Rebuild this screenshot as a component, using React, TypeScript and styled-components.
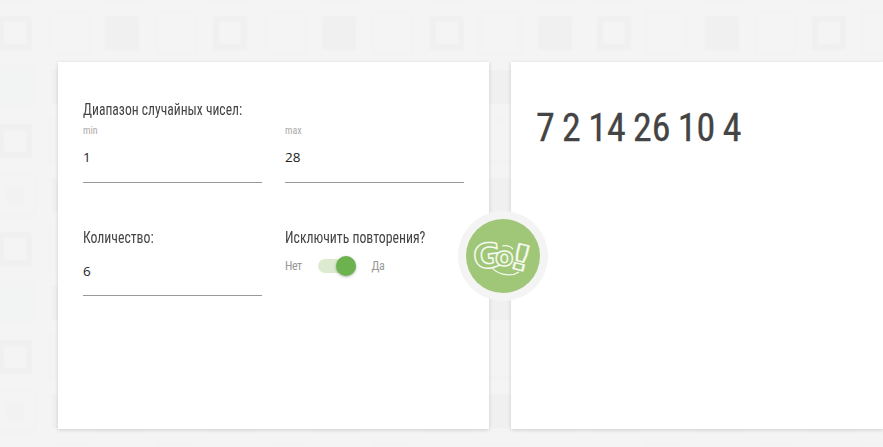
import React from "react";
import styled, { createGlobalStyle } from "styled-components";

const Global = createGlobalStyle`
  html, body { margin: 0; padding: 0; height: 100%; overflow: hidden; background: #f4f4f4; }
  #root { height: 100%; }
`;

const condensed = `"Liberation Sans Narrow", "Roboto Condensed", "Liberation Sans", sans-serif`;

const Page = styled.div`
  position: relative;
  height: 447px;
  overflow: hidden;
  box-sizing: border-box;
  padding: 62px 0 18px 58px;
  font-family: ${condensed};
  color: #444;
`;

const Backdrop = styled.svg`
  position: absolute;
  inset: 0;
`;

const Cards = styled.main`
  position: relative;
  display: flex;
  gap: 22px;
  height: 100%;
`;

const Card = styled.section`
  background: #fff;
  box-shadow: 0 1px 4px rgba(0, 0, 0, 0.16);
`;

const SettingsCard = styled(Card)`
  width: 431px;
  box-sizing: border-box;
  padding: 38px 25px 0;
  display: grid;
  grid-template-columns: 179px 179px;
  column-gap: 23px;
  grid-auto-rows: min-content;
`;

const ResultCard = styled(Card)`
  flex: 1;
  padding: 43px 25px;
`;

const Heading = styled.div`
  font-size: 16px;
  line-height: 19px;
  grid-column: 1 / -1;
  color: #444;
  white-space: nowrap;
  transform: scaleX(0.85);
  transform-origin: left center;
`;

const Field = styled.div<{ $top?: number }>`
  display: flex;
  flex-direction: column;
  margin-top: ${(p) => p.$top ?? 0}px;
`;

const SmallLabel = styled.div`
  font-size: 10px;
  line-height: 12px;
  color: #aaa;
  margin-top: 6px;
`;

const FieldLabel = styled.div`
  font-size: 16px;
  line-height: 19px;
  white-space: nowrap;
  transform: scaleX(0.86);
  transform-origin: left center;
`;

const Value = styled.div<{ $top: number; $pad: number }>`
  font-family: "Open Sans", "Noto Sans", sans-serif;
  font-size: 13.5px;
  line-height: 19px;
  color: #222;
  margin-top: ${(p) => p.$top}px;
  padding-bottom: ${(p) => p.$pad}px;
  border-bottom: 1px solid #999;
`;

const ToggleRow = styled.div`
  display: flex;
  align-items: center;
  margin-top: 9px;
  height: 20px;
  font-size: 12px;
  letter-spacing: -0.5px;
  color: #999;
`;

const Track = styled.div`
  position: relative;
  width: 38px;
  height: 14px;
  border-radius: 7px;
  background: #dcebd0;
  margin: 0 16px;
`;

const Thumb = styled.div`
  position: absolute;
  right: 0;
  top: -3px;
  width: 20px;
  height: 20px;
  border-radius: 50%;
  background: #6cb24f;
  box-shadow: 0 1px 3px rgba(0, 0, 0, 0.3);
`;

const Numbers = styled.div`
  font-size: 38px;
  line-height: 46px;
  color: #444;
  word-spacing: -1.4px;
  -webkit-text-stroke: 0.3px #444;
`;

const GoButton = styled.button`
  position: absolute;
  left: 400px;
  top: 149px;
  width: 90px;
  height: 90px;
  padding: 8px;
  box-sizing: border-box;
  border: 0;
  border-radius: 50%;
  background: #f4f4f5;
  cursor: pointer;
`;

const GoFace = styled.svg`
  display: block;
  width: 74px;
  height: 74px;
`;

const cols = [15, 69, 122, 177, 230, 285, 339, 393, 447, 500, 555, 614, 667, 722, 775, 829, 883];
const rows = [-21, 33, 87, 141, 195, 249, 303, 357, 411, 465];
const doubled = [0, 4, 8, 11, 15];

function BackgroundTiles() {
  const items: React.ReactNode[] = [];
  rows.forEach((cy, r) => {
    cols.forEach((cx, c) => {
      const key = `${c}-${r}`;
      const parity = c >= 11 ? c + 1 : c;
      if ((parity + r) % 2 === 1) {
        items.push(<rect key={key} x={cx - 17} y={cy - 17} width={34} height={34} fill="#f0f0f0" />);
        if (doubled.includes(c))
          items.push(<rect key={key + "i"} x={cx - 11} y={cy - 11} width={22} height={22} fill="#f4f4f4" />);
      } else {
        const filled = c === 0 && (r === 2 || r === 6);
        items.push(
          <rect
            key={key}
            x={cx - 20}
            y={cy - 21}
            width={40}
            height={42}
            fill={filled ? "#f2f3f3" : "#f4f4f4"}
            stroke="#f2f3f2"
            strokeWidth={4}
          />
        );
        if (c === 0 && (r === 4 || r === 8))
          items.push(<rect key={key + "i"} x={cx - 9} y={cy - 9} width={18} height={18} fill="#f2f2f2" />);
      }
    });
  });
  return (
    <Backdrop width="883" height="447" aria-hidden="true">
      <defs>
        <filter id="soft">
          <feGaussianBlur stdDeviation="0.8" />
        </filter>
      </defs>
      <g filter="url(#soft)">{items}</g>
    </Backdrop>
  );
}

function GoLogo() {
  const shape = {
    fill: "#9fc777",
    stroke: "#f6f9f1",
    strokeWidth: 1.5,
    fontFamily: "'DejaVu Sans', sans-serif",
    fontWeight: 700,
  };
  return (
    <GoFace viewBox="0 0 74 74">
      <circle cx="37" cy="37" r="37" fill="#9fc777" />
      <path d="M24 46c5 9 20 13 29 7M36 27c4-1 8 0 11 3" fill="none" stroke="#f6f9f1" strokeWidth="1.2" />
      <text x="7" y="49" fontSize="34" {...shape} transform="rotate(-6 20 36)">G</text>
      <text x="29" y="47" fontSize="27" {...shape}>o</text>
      <text x="0" y="13" fontSize="35" textAnchor="middle" {...shape} transform="translate(55 38) rotate(14) scale(1.5 1)">!</text>
    </GoFace>
  );
}

export default function App() {
  return (
    <>
      <Global />
      <Page>
        <BackgroundTiles />
        <Cards>
          <SettingsCard>
            <Heading>Диапазон случайных чисел:</Heading>
            <Field>
              <SmallLabel>min</SmallLabel>
              <Value $top={11} $pad={15}>1</Value>
            </Field>
            <Field>
              <SmallLabel>max</SmallLabel>
              <Value $top={11} $pad={15}>28</Value>
            </Field>
            <Field $top={45}>
              <FieldLabel>Количество:</FieldLabel>
              <Value $top={15} $pad={14}>6</Value>
            </Field>
            <Field $top={45}>
              <FieldLabel>Исключить повторения?</FieldLabel>
              <ToggleRow>
                Нет
                <Track>
                  <Thumb />
                </Track>
                Да
              </ToggleRow>
            </Field>
          </SettingsCard>
          <ResultCard>
            <Numbers>7 2 14 26 10 4</Numbers>
          </ResultCard>
          <GoButton aria-label="Go!">
            <GoLogo />
          </GoButton>
        </Cards>
      </Page>
    </>
  );
}
